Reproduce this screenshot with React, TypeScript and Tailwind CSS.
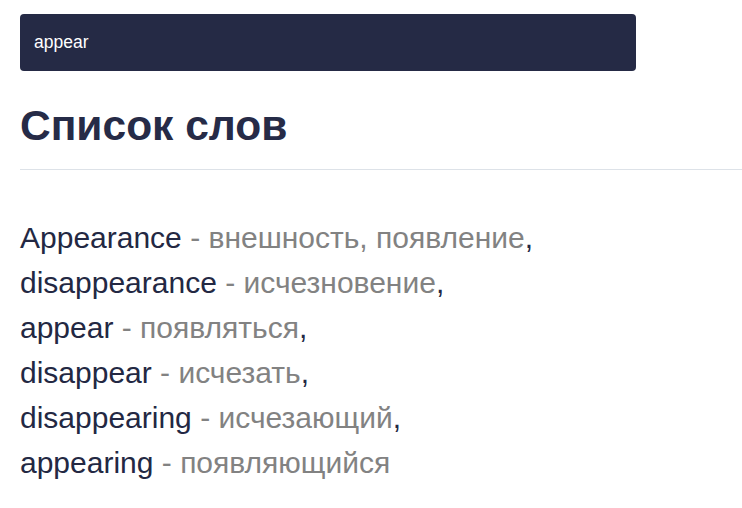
import React from "react";

const words: [string, string][] = [
  ["Appearance", "внешность, появление"],
  ["disappearance", "исчезновение"],
  ["appear", "появляться"],
  ["disappear", "исчезать"],
  ["disappearing", "исчезающий"],
  ["appearing", "появляющийся"],
];

export default function App() {
  return (
    <div className="min-h-[508px] bg-white pl-5 pt-[14px]" style={{ fontFamily: '"Liberation Sans", Arial, sans-serif' }}>
      <div className="flex h-[57px] w-[616px] items-center rounded-[4px] bg-[#252a45] px-[14px] text-[17.5px] text-white">
        appear
      </div>
      <h2 className="mt-[29px] text-[42.5px] font-bold leading-[1.2] text-[#262b47]">Список слов</h2>
      <div className="mt-[18px] h-px bg-[#dde2e8]" />
      <div className="mt-[45px] text-[30px] leading-[45px] text-[#232843]">
        {words.map(([w, t], i) => (
          <div key={w}>
            {w}
            <span className="text-[#828282]"> - {t}</span>
            {i < words.length - 1 ? "," : ""}
          </div>
        ))}
      </div>
    </div>
  );
}
